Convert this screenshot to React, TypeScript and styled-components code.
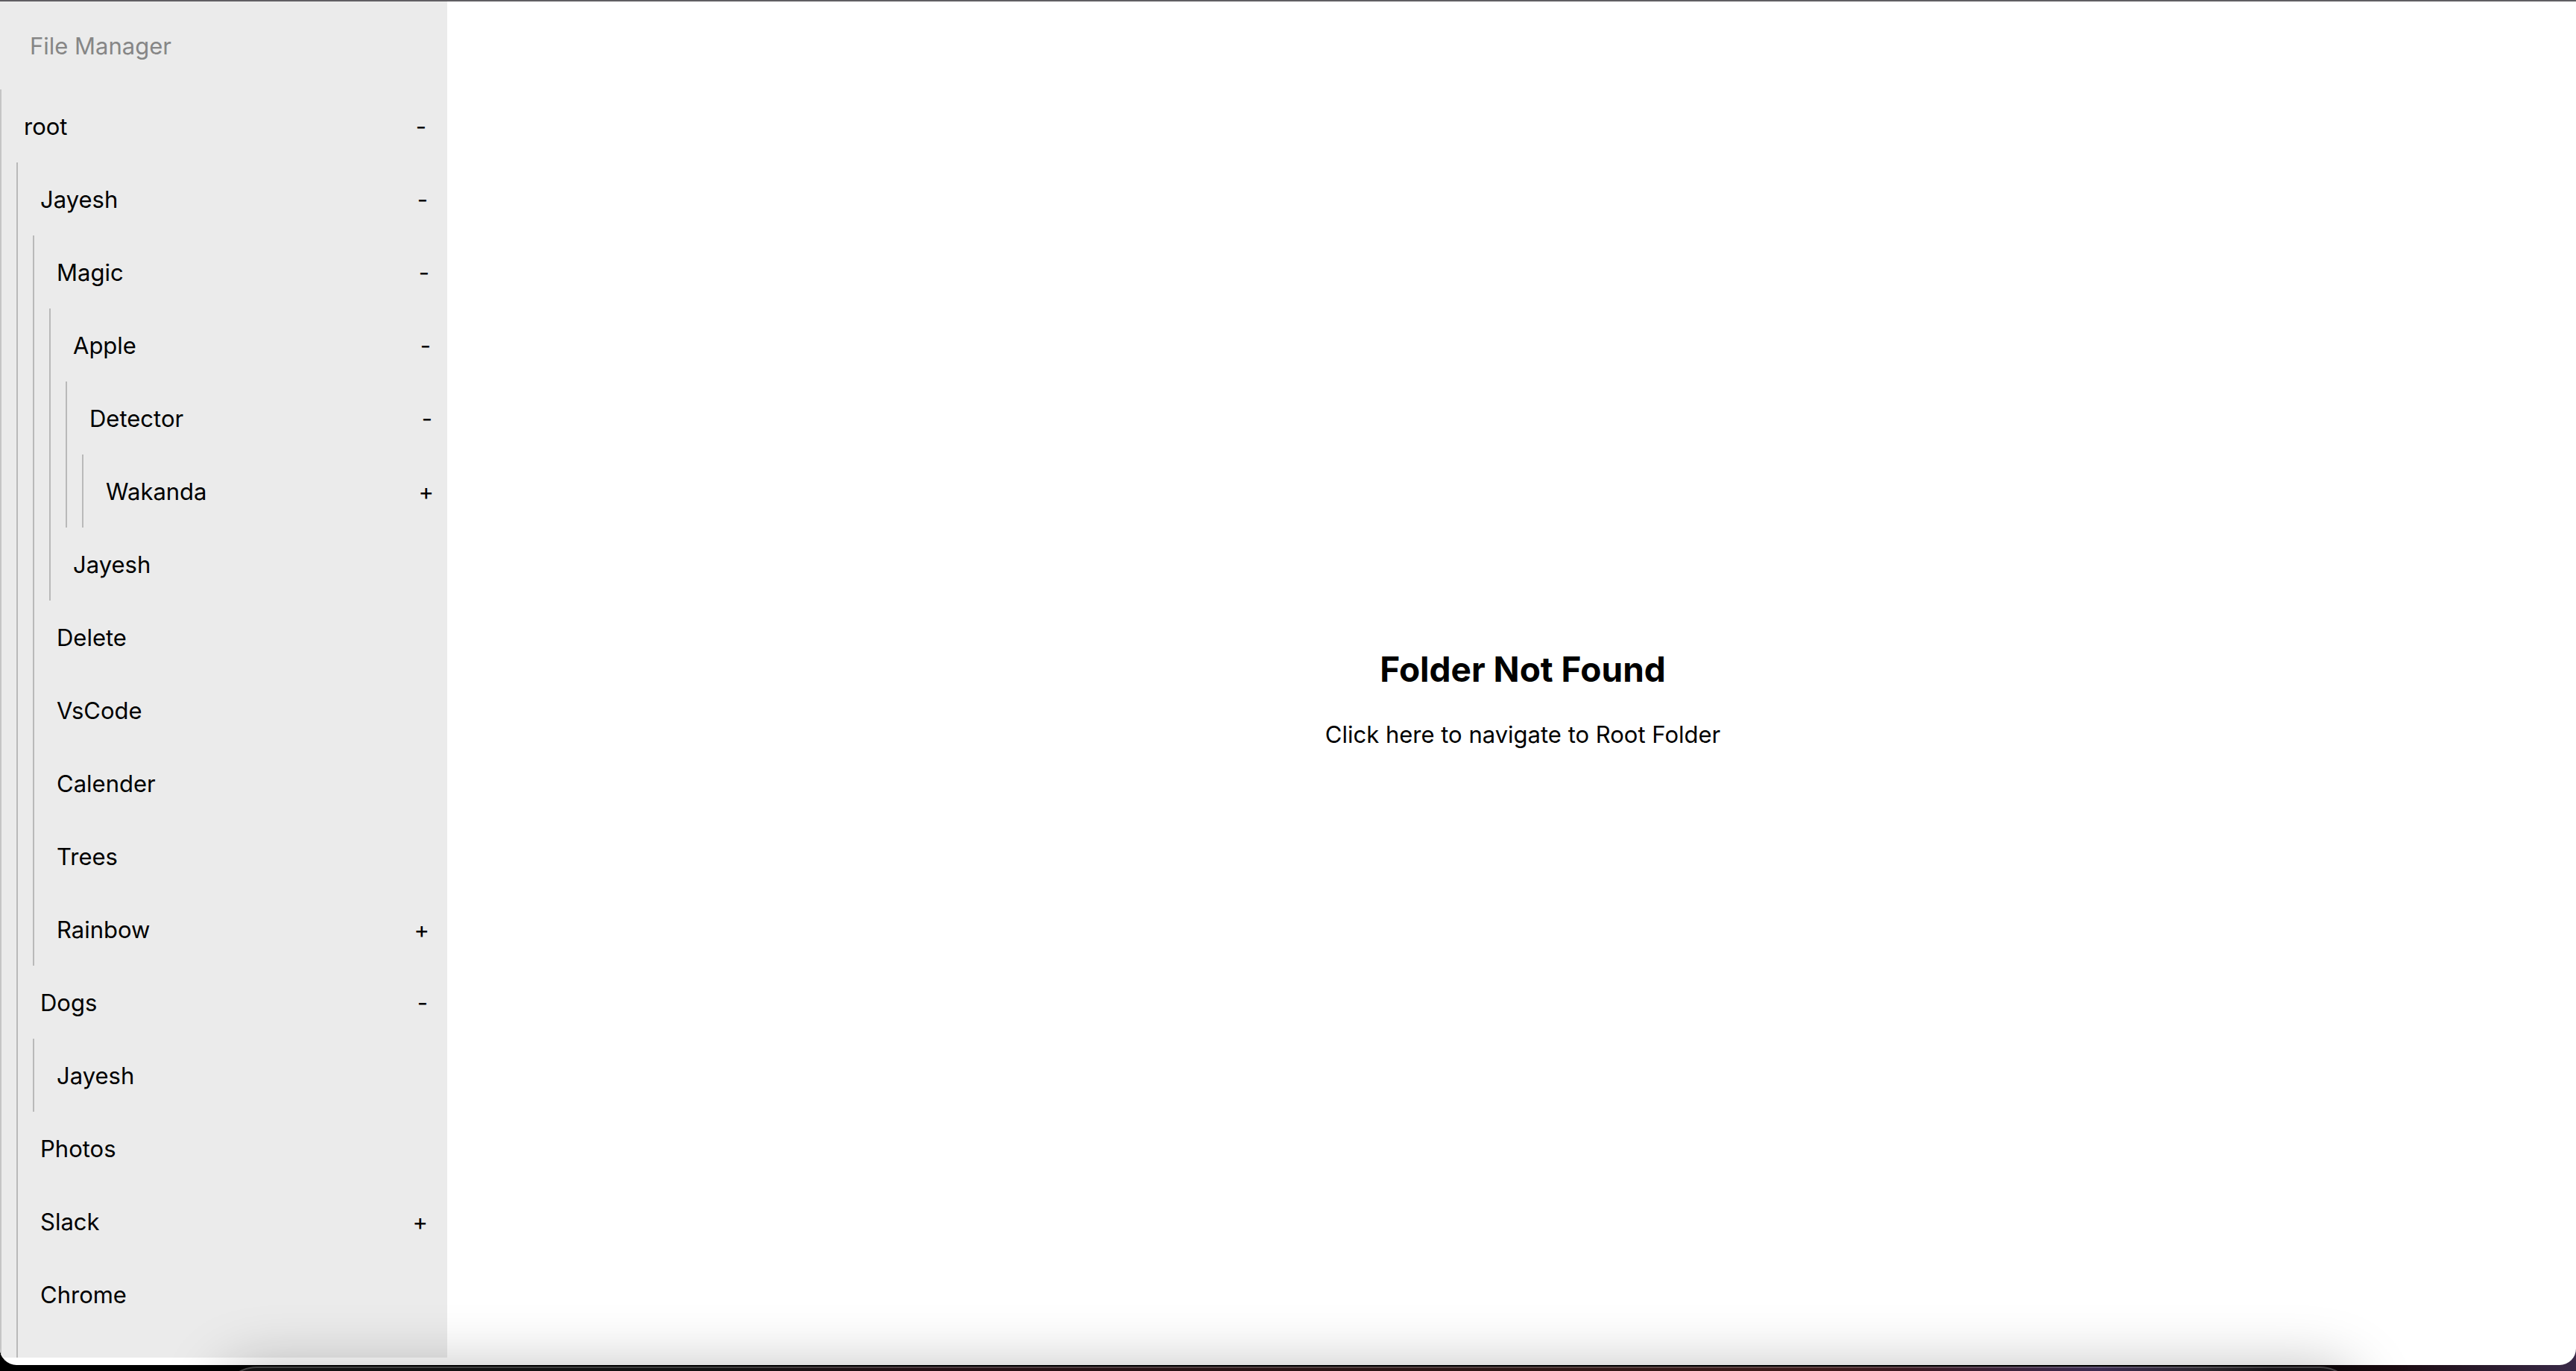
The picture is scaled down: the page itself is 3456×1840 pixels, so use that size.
import React, { useState } from "react";
import styled, { createGlobalStyle } from "styled-components";

type Folder = {
  name: string;
  open?: boolean;
  expandable?: boolean;
  children?: Folder[];
};

const tree: Folder = {
  name: "root",
  open: true,
  expandable: true,
  children: [
    {
      name: "Jayesh",
      open: true,
      expandable: true,
      children: [
        {
          name: "Magic",
          open: true,
          expandable: true,
          children: [
            {
              name: "Apple",
              open: true,
              expandable: true,
              children: [
                {
                  name: "Detector",
                  open: true,
                  expandable: true,
                  children: [{ name: "Wakanda", expandable: true }],
                },
              ],
            },
            { name: "Jayesh" },
          ],
        },
        { name: "Delete" },
        { name: "VsCode" },
        { name: "Calender" },
        { name: "Trees" },
        { name: "Rainbow", expandable: true },
      ],
    },
    {
      name: "Dogs",
      open: true,
      expandable: true,
      children: [{ name: "Jayesh" }],
    },
    { name: "Photos" },
    { name: "Slack", expandable: true },
    { name: "Chrome" },
  ],
};

const GlobalStyle = createGlobalStyle`
  *, *::before, *::after {
    box-sizing: border-box;
  }
  body {
    margin: 0;
    background: #000;
    color: #000;
    font-family: Inter, "Noto Sans", "Liberation Sans", sans-serif;
    font-size: 31px;
    line-height: 38px;
  }
`;

const Desktop = styled.div`
  position: relative;
  display: flex;
  height: 100vh;
  padding-bottom: 8px;
  overflow: hidden;
  background: linear-gradient(90deg, #000 0 88%, #1c0c12 93%, #3a2a48 100%);
`;

const Window = styled.div`
  flex: 1;
  display: flex;
  padding-bottom: 10px;
  border-top: 2px solid #605e63;
  border-radius: 0 0 22px 22px;
  background: #fff;
  overflow: hidden;
`;

const Sidebar = styled.aside`
  flex: none;
  display: flex;
  flex-direction: column;
  width: 600px;
  overflow: hidden;
  background: #ebebeb;
`;

const SidebarTitle = styled.header`
  padding: 41px 40px 39px;
  color: #868686;
`;

const Group = styled.ul<{ $nested?: boolean; $grow?: boolean }>`
  display: flex;
  flex-direction: column;
  flex: ${(p) => (p.$grow ? "1 0 auto" : "none")};
  margin: 0 ${(p) => (p.$nested ? "-2px" : "0")} 0 ${(p) => (p.$nested ? "20px" : "0")};
  padding: 0;
  border-left: 2px solid ${(p) => (p.$nested ? "#b9b9b9" : "#c5c5c5")};
  list-style: none;
`;

const Item = styled.li<{ $grow?: boolean }>`
  display: flex;
  flex-direction: column;
  flex: ${(p) => (p.$grow ? "1 0 auto" : "none")};
`;

const Row = styled.div`
  display: flex;
  align-items: center;
  justify-content: space-between;
  height: 98px;
  padding: 2px 28px 0 30px;
`;

const PlainButton = styled.button`
  padding: 0;
  border: 0;
  background: none;
  color: inherit;
  font: inherit;
  cursor: pointer;
`;

const Main = styled.main`
  flex: 1;
  display: flex;
  flex-direction: column;
  align-items: center;
  justify-content: center;
  gap: 40px;
  padding: 50px 0 0 30px;
`;

const Heading = styled.h1`
  margin: 0;
  font-size: 46px;
  font-weight: 700;
  line-height: 58px;
`;

const RootLink = styled.a`
  color: inherit;
  text-decoration: none;
`;

const Dock = styled.div`
  position: absolute;
  top: calc(100% - 6px);
  left: 296px;
  right: 295px;
  height: 160px;
  border: 2px solid rgba(255, 255, 255, 0.2);
  border-radius: 48px;
  background: linear-gradient(90deg, #121212 0 23%, #241014 33%, #2c1614 60%, #3d1a1a 75%, #3a1820 79%, #3a2a50 88%, #2a262c 93%, #161216 96%);
  background-clip: border-box;
  box-shadow: 0 0 80px rgba(0, 0, 0, 0.25);
`;

function FolderItem({ folder, top }: { folder: Folder; top?: boolean }) {
  const [open, setOpen] = useState(!!folder.open);
  return (
    <Item $grow={top}>
      <Row>
        <PlainButton type="button">{folder.name}</PlainButton>
        {folder.expandable && (
          <PlainButton
            type="button"
            aria-expanded={open}
            onClick={() => setOpen(!open)}
          >
            {open ? "-" : "+"}
          </PlainButton>
        )}
      </Row>
      {open && folder.children && (
        <Group $nested $grow={top}>
          {folder.children.map((child) => (
            <FolderItem key={child.name} folder={child} />
          ))}
        </Group>
      )}
    </Item>
  );
}

export default function App() {
  return (
    <>
      <GlobalStyle />
      <Desktop>
        <Window>
          <Sidebar>
            <SidebarTitle>File Manager</SidebarTitle>
            <Group $grow>
              <FolderItem folder={tree} top />
            </Group>
          </Sidebar>
          <Main>
            <Heading>Folder Not Found</Heading>
            <RootLink href="#root">Click here to navigate to Root Folder</RootLink>
          </Main>
        </Window>
        <Dock />
      </Desktop>
    </>
  );
}
